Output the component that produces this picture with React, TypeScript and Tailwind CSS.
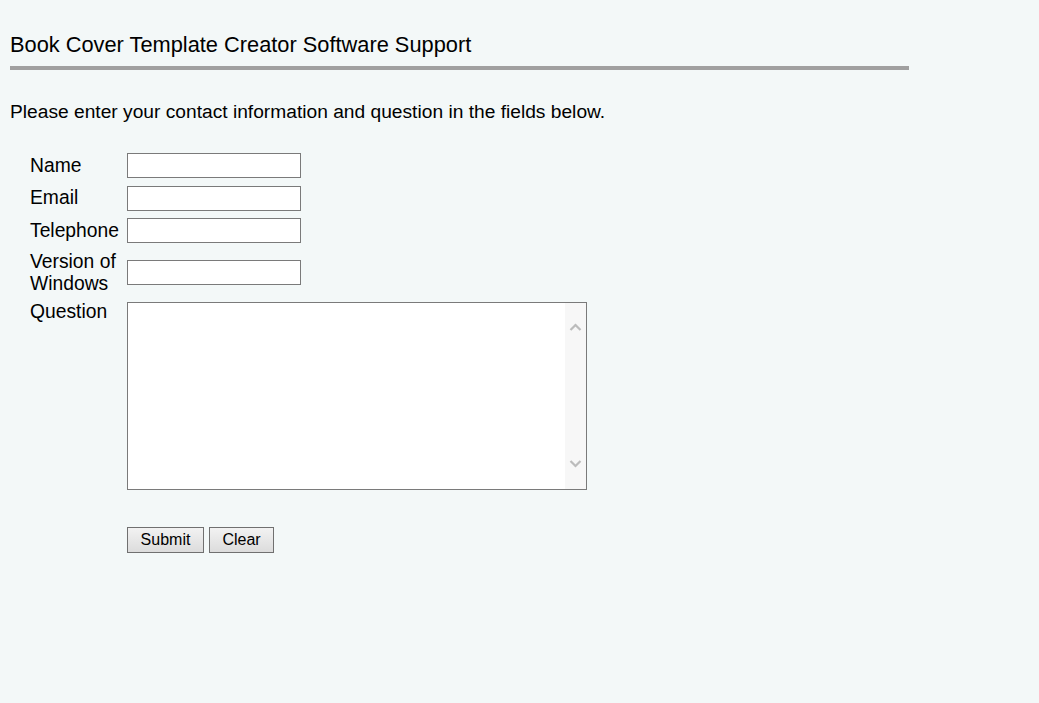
import { useState } from "react"

const fields = [
  { id: "name", label: "Name" },
  { id: "email", label: "Email" },
  { id: "phone", label: "Telephone" },
  { id: "windows", label: "Version of Windows" },
]

function Chevron({ up }: { up?: boolean }) {
  return (
    <svg width="13" height="8" viewBox="0 0 13 8" className="block">
      <path
        d={up ? "M1.5 7 L6.5 2 L11.5 7" : "M1.5 1 L6.5 6 L11.5 1"}
        fill="none"
        stroke="#bcbcbc"
        strokeWidth="2.2"
      />
    </svg>
  )
}

export default function App() {
  const [values, setValues] = useState<Record<string, string>>({})
  const [question, setQuestion] = useState("")

  function clear() {
    setValues({})
    setQuestion("")
  }

  return (
    <div className="min-h-screen bg-[#f3f8f8] pl-[10px] pt-[32px] font-['Liberation_Sans',Arial,sans-serif] text-black">
      <h1 className="text-[21.8px] leading-[25px]">
        Book Cover Template Creator Software Support
      </h1>
      <div className="mt-[9px] h-[4px] w-[899px] bg-[#a0a0a0]" />
      <p className="mt-[31px] text-[19.2px] leading-[22px]">
        Please enter your contact information and question in the fields below.
      </p>

      <form
        className="ml-[20px] mt-[30px] grid grid-cols-[97px_auto] gap-y-[7.5px] text-[19.3px] leading-[22px]"
        onSubmit={(e) => e.preventDefault()}
      >
        {fields.map((f) => (
          <div key={f.id} className="contents">
            <label htmlFor={f.id} className="flex items-center">
              {f.label}
            </label>
            <div className="flex items-center">
              <input
                id={f.id}
                type="text"
                value={values[f.id] ?? ""}
                onChange={(e) =>
                  setValues((v) => ({ ...v, [f.id]: e.target.value }))
                }
                className="h-[25px] w-[174px] border border-[#7a7a7a] bg-white px-1 text-[15px] outline-none"
              />
            </div>
          </div>
        ))}

        <label htmlFor="question" className="-mt-px">
          Question
        </label>
        <div className="flex h-[188px] w-[460px] border border-[#7a7a7a] bg-white">
          <textarea
            id="question"
            value={question}
            onChange={(e) => setQuestion(e.target.value)}
            className="flex-1 resize-none overflow-hidden bg-white p-1 text-[15px] outline-none"
          />
          <div className="flex w-[21px] flex-col items-center justify-between bg-[#f7f7f7] pb-[21px] pt-[20px]">
            <Chevron up />
            <Chevron />
          </div>
        </div>

        <div />
        <div className="mt-[29.5px] flex gap-[5px] text-[16px]">
          <button
            type="submit"
            className="h-[26px] w-[77px] border border-[#707070] bg-gradient-to-b from-[#f2f2f2] to-[#dcdcdc]"
          >
            Submit
          </button>
          <button
            type="button"
            onClick={clear}
            className="h-[26px] w-[65px] border border-[#707070] bg-gradient-to-b from-[#f2f2f2] to-[#dcdcdc]"
          >
            Clear
          </button>
        </div>
      </form>
    </div>
  )
}
